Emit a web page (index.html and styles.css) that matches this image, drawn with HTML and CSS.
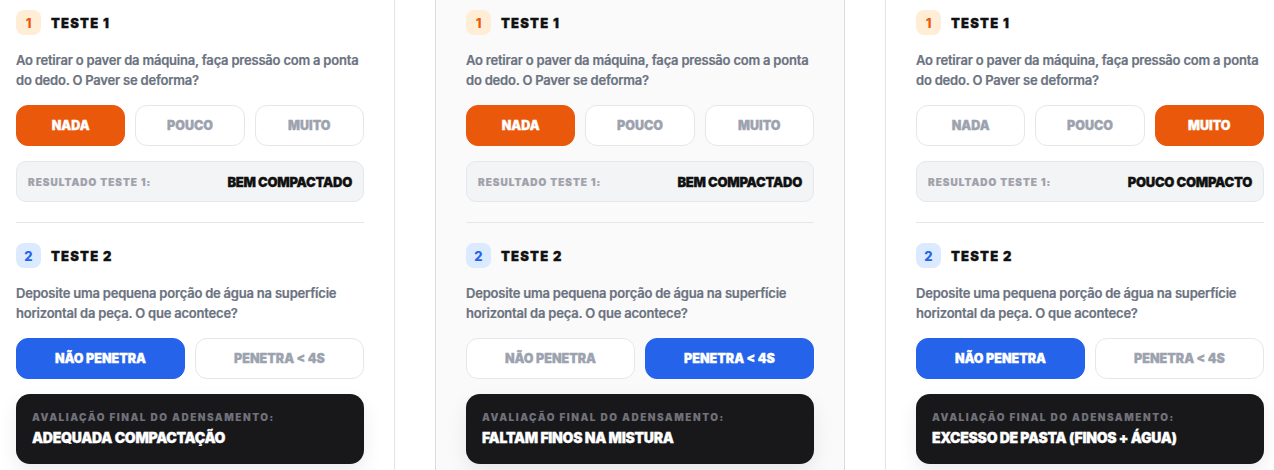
FILE: index.html
```html
<!DOCTYPE html>
<html lang="pt-BR">
<head>
    <meta charset="UTF-8">
    <meta name="viewport" content="width=device-width, initial-scale=1.0">
    <title>Teste de Adensamento</title>
    <link rel="stylesheet" href="styles.css">
</head>
<body>
    <div class="board">

        <div class="card">
            <div class="test-header">
                <span class="step step-orange">1</span>
                <h2>TESTE 1</h2>
            </div>
            <p class="question">Ao retirar o paver da máquina, faça pressão com a ponta do dedo. O Paver se deforma?</p>
            <div class="options three">
                <button class="option active-orange">NADA</button>
                <button class="option">POUCO</button>
                <button class="option">MUITO</button>
            </div>
            <div class="result">
                <span class="result-label">RESULTADO TESTE 1:</span>
                <span class="result-value">BEM COMPACTADO</span>
            </div>

            <div class="divider"></div>

            <div class="test-header">
                <span class="step step-blue">2</span>
                <h2>TESTE 2</h2>
            </div>
            <p class="question">Deposite uma pequena porção de água na superfície horizontal da peça. O que acontece?</p>
            <div class="options two">
                <button class="option active-blue">NÃO PENETRA</button>
                <button class="option">PENETRA &lt; 4S</button>
            </div>
            <div class="final">
                <span class="final-label">AVALIAÇÃO FINAL DO ADENSAMENTO:</span>
                <span class="final-value">ADEQUADA COMPACTAÇÃO</span>
            </div>
        </div>

        <div class="card card-muted">
            <div class="test-header">
                <span class="step step-orange">1</span>
                <h2>TESTE 1</h2>
            </div>
            <p class="question">Ao retirar o paver da máquina, faça pressão com a ponta do dedo. O Paver se deforma?</p>
            <div class="options three">
                <button class="option active-orange">NADA</button>
                <button class="option">POUCO</button>
                <button class="option">MUITO</button>
            </div>
            <div class="result">
                <span class="result-label">RESULTADO TESTE 1:</span>
                <span class="result-value">BEM COMPACTADO</span>
            </div>

            <div class="divider"></div>

            <div class="test-header">
                <span class="step step-blue">2</span>
                <h2>TESTE 2</h2>
            </div>
            <p class="question">Deposite uma pequena porção de água na superfície horizontal da peça. O que acontece?</p>
            <div class="options two">
                <button class="option">NÃO PENETRA</button>
                <button class="option active-blue">PENETRA &lt; 4S</button>
            </div>
            <div class="final">
                <span class="final-label">AVALIAÇÃO FINAL DO ADENSAMENTO:</span>
                <span class="final-value">FALTAM FINOS NA MISTURA</span>
            </div>
        </div>

        <div class="card">
            <div class="test-header">
                <span class="step step-orange">1</span>
                <h2>TESTE 1</h2>
            </div>
            <p class="question">Ao retirar o paver da máquina, faça pressão com a ponta do dedo. O Paver se deforma?</p>
            <div class="options three">
                <button class="option">NADA</button>
                <button class="option">POUCO</button>
                <button class="option active-orange">MUITO</button>
            </div>
            <div class="result">
                <span class="result-label">RESULTADO TESTE 1:</span>
                <span class="result-value">POUCO COMPACTO</span>
            </div>

            <div class="divider"></div>

            <div class="test-header">
                <span class="step step-blue">2</span>
                <h2>TESTE 2</h2>
            </div>
            <p class="question">Deposite uma pequena porção de água na superfície horizontal da peça. O que acontece?</p>
            <div class="options two">
                <button class="option active-blue">NÃO PENETRA</button>
                <button class="option">PENETRA &lt; 4S</button>
            </div>
            <div class="final">
                <span class="final-label">AVALIAÇÃO FINAL DO ADENSAMENTO:</span>
                <span class="final-value">EXCESSO DE PASTA (FINOS + ÁGUA)</span>
            </div>
        </div>

    </div>
</body>
</html>
```

FILE: styles.css
```css
* {
    margin: 0;
    padding: 0;
    box-sizing: border-box;
}

body {
    background: white;
    font-family: Inter, "Noto Sans", sans-serif;
    overflow: hidden;
    height: 470px;
}

.board {
    display: flex;
    gap: 40px;
    margin-top: -21px;
    margin-left: -15px;
}

.card {
    flex-shrink: 0;
    width: 410px;
    background: white;
    border: 1px solid #e4e4e7;
    padding: 30px 30px 40px;
}

.card-muted {
    background: #fafafa;
    border-color: #dcdcdf;
}

.test-header {
    display: flex;
    align-items: center;
    gap: 10px;
    margin-bottom: 15px;
}

.step {
    width: 25px;
    height: 25px;
    border-radius: 8px;
    display: flex;
    align-items: center;
    justify-content: center;
    font-size: 13px;
    font-weight: 800;
}

.step-orange {
    background: #ffedd5;
    color: #ea580c;
}

.step-blue {
    background: #dbeafe;
    color: #2563eb;
}

.test-header h2 {
    font-size: 13px;
    font-weight: 900;
    letter-spacing: 0.09em;
    color: #111;
    -webkit-text-stroke: 0.3px #111;
}

.question {
    font-size: 13px;
    font-weight: 600;
    letter-spacing: -0.016em;
    line-height: 20px;
    color: #6b7280;
    margin-bottom: 15px;
    -webkit-text-stroke: 0.2px #6b7280;
}

.options {
    display: grid;
    gap: 10px;
    margin-bottom: 15px;
}

.options.three {
    grid-template-columns: 1fr 1fr 1fr;
}

.options.two {
    grid-template-columns: 1fr 1fr;
}

.option {
    height: 41px;
    background: white;
    border: 1px solid #e5e7eb;
    border-radius: 12px;
    font-family: inherit;
    font-size: 12.5px;
    font-weight: 900;
    letter-spacing: 0;
    color: #9ca3af;
    -webkit-text-stroke: 0.3px currentColor;
    cursor: pointer;
}

.option.active-orange {
    background: #ea580c;
    border-color: #ea580c;
    color: white;
}

.option.active-blue {
    background: #2563eb;
    border-color: #2563eb;
    color: white;
}

.result {
    height: 41px;
    display: flex;
    align-items: center;
    justify-content: space-between;
    padding: 0 11px;
    background: #f3f4f6;
    border: 1px solid #e5e7eb;
    border-radius: 10px;
}

.result-label {
    font-size: 10px;
    font-weight: 900;
    letter-spacing: 0.1em;
    color: #a1a1aa;
    -webkit-text-stroke: 0.2px #a1a1aa;
}

.result-value {
    font-size: 13px;
    font-weight: 900;
    letter-spacing: -0.02em;
    color: #111;
    -webkit-text-stroke: 0.3px #111;
}

.divider {
    height: 1px;
    background: #e5e7eb;
    margin: 20px 0;
}

.final {
    display: flex;
    flex-direction: column;
    gap: 4px;
    height: 70px;
    padding: 16px;
    background: #18181b;
    border-radius: 14px;
    box-shadow: 0 8px 20px rgba(0,0,0,0.08);
}

.final-label {
    font-size: 10px;
    line-height: 14px;
    font-weight: 900;
    letter-spacing: 0.15em;
    color: #71717a;
}

.final-value {
    font-size: 14px;
    line-height: 20px;
    font-weight: 900;
    letter-spacing: -0.02em;
    color: white;
    -webkit-text-stroke: 0.3px white;
}
```
